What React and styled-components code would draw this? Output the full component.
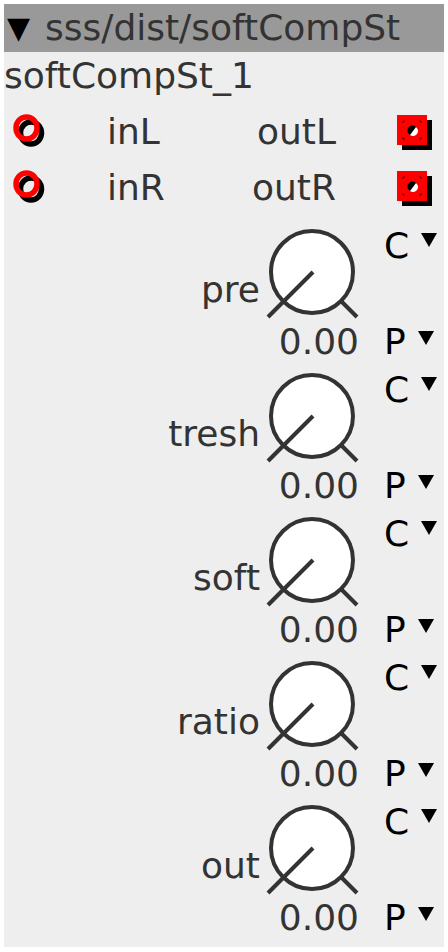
import React from "react";
import styled, { createGlobalStyle } from "styled-components";

const GlobalStyle = createGlobalStyle`
    body {
        margin: 0;
        background: #ffffff;
        font-family: "DejaVu Sans", "Liberation Sans", sans-serif;
    }
`;

const Panel = styled.div`
    margin: 4px;
    width: 440px;
    height: 943px;
    background: #eeeeee;
    color: #333333;
    font-size: 36px;
    display: flex;
    flex-direction: column;
`;

const Header = styled.div`
    height: 48px;
    background: #999999;
    display: flex;
    align-items: center;
    line-height: 48px;
    white-space: nowrap;
    overflow: hidden;

    .arrow {
        color: #000;
        width: 38px;
        padding-left: 3px;
        font-size: 30px;
    }
`;

const Name = styled.div`
    line-height: 40px;
    padding: 4px 0 8px;
`;

const PortRow = styled.div`
    height: 56px;
    display: flex;
    align-items: center;
    padding: 0 12px 0 9px;
    line-height: 40px;
`;

const InName = styled.span`
    flex: 1;
    margin-left: 58px;
`;

const OutName = styled.span`
    margin-right: 61px;
    text-align: right;
`;

const Params = styled.div`
    margin-top: 10px;
    display: flex;
    flex-direction: column;
`;

const ParamBlock = styled.div`
    height: 144px;
    display: grid;
    grid-template-columns: 1fr 100px 82px;
    grid-template-rows: 96px 40px;
    line-height: 40px;
`;

const Label = styled.div`
    grid-column: 1;
    grid-row: 1;
    align-self: end;
    margin-bottom: 12px;
    margin-right: 2px;
    text-align: right;
`;

const KnobCell = styled.div`
    grid-column: 2;
    grid-row: 1;
`;

const Value = styled.div`
    grid-column: 2;
    grid-row: 2;
    text-align: right;
    padding-right: 3px;
`;

const Pick = styled.div`
    grid-column: 3;
    grid-row: ${(p) => p.$row};
    align-self: start;
    padding-left: 22px;
    color: #000;
    display: flex;
    align-items: center;
`;

const Caret = styled.span`
    display: inline-block;
    margin-left: 12px;
    margin-top: ${(p) => (p.$low ? "-9px" : "-12px")};
    width: 0;
    height: 0;
    border-left: 8px solid transparent;
    border-right: 8px solid transparent;
    border-top: 14px solid #000;
`;

const Inlet = () => (
    <svg width="36" height="36" viewBox="0 0 36 36">
        <ellipse cx="18" cy="19" rx="10.5" ry="11" fill="none" stroke="#000" strokeWidth="5.5" />
        <ellipse cx="13.5" cy="14" rx="10.5" ry="11" fill="none" stroke="#ff0000" strokeWidth="5.5" />
    </svg>
);

const Outlet = () => (
    <svg width="35" height="35" viewBox="0 0 35 35">
        <rect x="5" y="5" width="30" height="30" fill="#000" />
        <rect x="0" y="0" width="30" height="30" fill="#ff0000" />
        <path
            d="M6 8V6H8M22 6H24V8M24 22V24H22M8 24H6V22"
            fill="none"
            stroke="#550000"
            strokeWidth="1"
        />
        <circle cx="15.5" cy="15.5" r="5" fill="#000" />
        <path d="M19 12 A5 5 0 0 1 13 20 Z" fill="#fff" />
    </svg>
);

const Knob = () => (
    <svg width="100" height="96" viewBox="0 0 100 96">
        <circle cx="50" cy="46" r="41" fill="#fff" stroke="#333" strokeWidth="4" />
        <line x1="51" y1="46" x2="6" y2="91" stroke="#333" strokeWidth="4" />
        <line x1="79" y1="75" x2="95" y2="91" stroke="#333" strokeWidth="4" />
    </svg>
);

const params = ["pre", "tresh", "soft", "ratio", "out"];

export default function App() {
    return (
        <>
            <GlobalStyle />
            <Panel>
                <Header>
                    <span className="arrow">▼</span>
                    <span>sss/dist/softCompSt</span>
                </Header>
                <Name>softCompSt_1</Name>

                <PortRow>
                    <Inlet />
                    <InName>inL</InName>
                    <OutName>outL</OutName>
                    <Outlet />
                </PortRow>
                <PortRow>
                    <Inlet />
                    <InName>inR</InName>
                    <OutName>outR</OutName>
                    <Outlet />
                </PortRow>

                <Params>
                    {params.map((name) => (
                        <ParamBlock key={name}>
                            <Label>{name}</Label>
                            <KnobCell>
                                <Knob />
                            </KnobCell>
                            <Value>0.00</Value>
                            <Pick $row={1}>
                                C<Caret />
                            </Pick>
                            <Pick $row={2}>
                                P<Caret $low />
                            </Pick>
                        </ParamBlock>
                    ))}
                </Params>
            </Panel>
        </>
    );
}
